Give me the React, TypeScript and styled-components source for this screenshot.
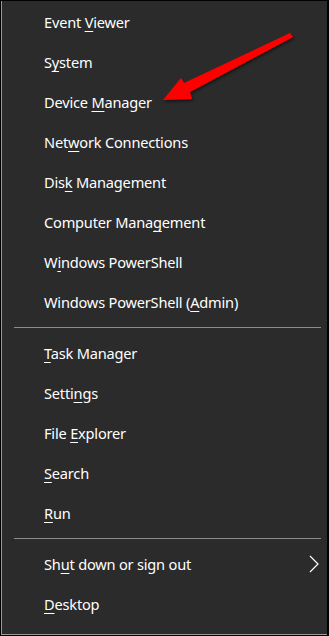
import React from 'react'
import styled, { createGlobalStyle } from 'styled-components'

const GlobalStyle = createGlobalStyle`
  html, body {
    margin: 0;
    padding: 0;
    background: #000;
  }
  * {
    box-sizing: border-box;
  }
`

const Frame = styled.div`
  position: relative;
  width: 329px;
  height: 636px;
  border: 1px solid #000;
  border-right-width: 2px;
  background: #000;
`

const Panel = styled.div`
  height: 100%;
  display: flex;
  flex-direction: column;
  padding: 1px 0 10px;
  background: #2b2b2b;
  border-left: 1px solid #9a9a9a;
  border-bottom: 1px solid #9a9a9a;
  font-family: 'Noto Sans', 'Open Sans', sans-serif;
  font-size: 14.6px;
  letter-spacing: -0.2px;
  color: #fff;
`

const Item = styled.div`
  height: 40px;
  flex: none;
  display: flex;
  align-items: center;
  justify-content: space-between;
  padding: 0 8px 0 42px;
  white-space: nowrap;
`

const Key = styled.span`
  text-decoration: underline;
  text-underline-offset: 3px;
  text-decoration-thickness: 1px;
`

const Separator = styled.hr`
  flex: none;
  border: none;
  height: 1px;
  margin: 5px 6px 5px 12px;
  background: #8c8c8c;
`

const Chevron = () => (
  <svg width="10" height="18" viewBox="0 0 10 18">
    <path d="M1 1 L9 9 L1 17" fill="none" stroke="#fff" strokeWidth="1.2" />
  </svg>
)

const Pointer = styled.svg`
  position: absolute;
  left: 0;
  top: 0;
  pointer-events: none;
`

type Entry = { pre: string; key: string; post: string; more?: boolean }

const groups: Entry[][] = [
  [
    { pre: 'Event ', key: 'V', post: 'iewer' },
    { pre: 'S', key: 'y', post: 'stem' },
    { pre: 'Device ', key: 'M', post: 'anager' },
    { pre: 'Net', key: 'w', post: 'ork Connections' },
    { pre: 'Dis', key: 'k', post: ' Management' },
    { pre: 'Computer Mana', key: 'g', post: 'ement' },
    { pre: 'W', key: 'i', post: 'ndows PowerShell' },
    { pre: 'Windows PowerShell (', key: 'A', post: 'dmin)' },
  ],
  [
    { pre: '', key: 'T', post: 'ask Manager' },
    { pre: 'Setti', key: 'n', post: 'gs' },
    { pre: 'File ', key: 'E', post: 'xplorer' },
    { pre: '', key: 'S', post: 'earch' },
    { pre: '', key: 'R', post: 'un' },
  ],
  [
    { pre: 'Sh', key: 'u', post: 't down or sign out', more: true },
    { pre: '', key: 'D', post: 'esktop' },
  ],
]

export default function App() {
  return (
    <>
      <GlobalStyle />
      <Frame>
        <Panel>
          {groups.map((group, gi) => (
            <React.Fragment key={gi}>
              {gi > 0 && <Separator />}
              {group.map((e) => (
                <Item key={e.pre + e.key + e.post}>
                  <span>
                    {e.pre}
                    <Key>{e.key}</Key>
                    {e.post}
                  </span>
                  {e.more && <Chevron />}
                </Item>
              ))}
            </React.Fragment>
          ))}
        </Panel>
        <Pointer width="329" height="636" viewBox="0 0 329 636">
          <defs>
            <filter id="sh" x="-20%" y="-20%" width="140%" height="140%">
              <feDropShadow dx="1" dy="2" stdDeviation="1.5" floodColor="#000" floodOpacity="0.5" />
            </filter>
          </defs>
          <path
            d="M289 32 L292 36 L189 91 L191 98 L162 99 L180 77 L183 82 Z"
            fill="#f00"
            filter="url(#sh)"
          />
        </Pointer>
      </Frame>
    </>
  )
}
